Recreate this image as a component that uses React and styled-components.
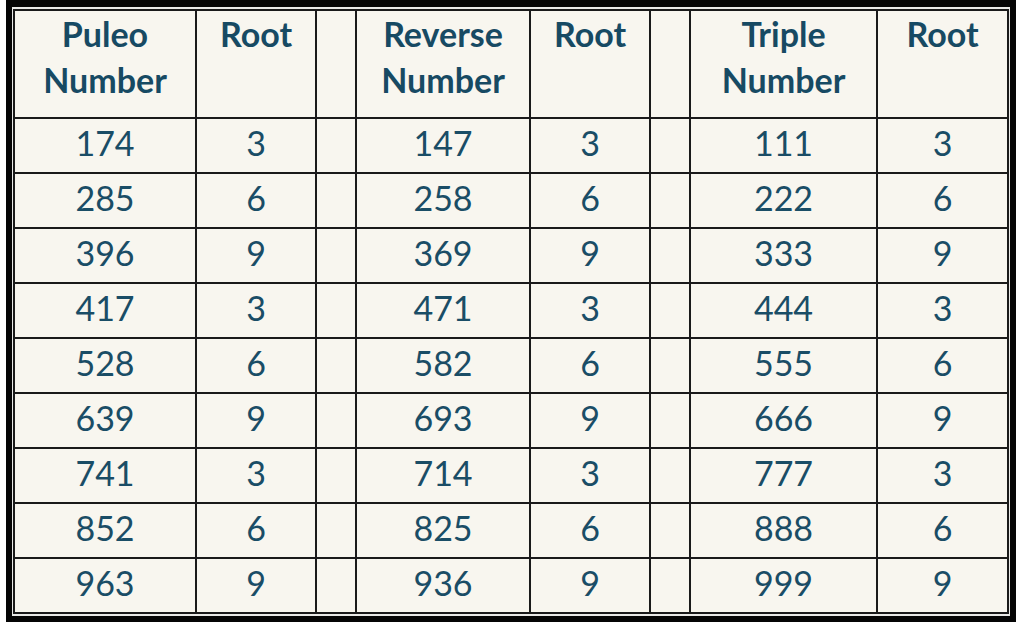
import React from 'react';
import styled, { createGlobalStyle } from 'styled-components';

const GlobalStyle = createGlobalStyle`
  html, body {
    margin: 0;
    padding: 0;
    background: #ffffff;
  }
  body {
    font-family: Lato, "Open Sans", sans-serif;
  }
`;

const Frame = styled.div`
  width: 996px;
  margin-left: 6px;
  border: 6px solid #050505;
  border-top-width: 7px;
  padding: 2px 1px;
  background: #e9e9e7;
`;

const Grid = styled.div`
  display: grid;
  grid-template-columns: 180px 118px 38px 172px 118px 38px 185px 129px;
  grid-template-rows: 106px repeat(9, 53px);
  gap: 2px;
  padding: 2px;
  background: #1a1a1a;
`;

const Cell = styled.div`
  background: #f8f6ef;
  color: #1a4d66;
  font-size: 34px;
  display: flex;
  justify-content: center;
  align-items: center;
  padding-bottom: 6px;
`;

const HeadCell = styled(Cell)`
  font-weight: 700;
  line-height: 46px;
  text-align: center;
  align-items: flex-start;
  padding-top: 0;
  padding-bottom: 0;
  color: #174a63;
`;

const rows = [
  ['174', '3', '147', '3', '111', '3'],
  ['285', '6', '258', '6', '222', '6'],
  ['396', '9', '369', '9', '333', '9'],
  ['417', '3', '471', '3', '444', '3'],
  ['528', '6', '582', '6', '555', '6'],
  ['639', '9', '693', '9', '666', '9'],
  ['741', '3', '714', '3', '777', '3'],
  ['852', '6', '825', '6', '888', '6'],
  ['963', '9', '936', '9', '999', '9'],
];

const App = () => {
  return (
    <>
      <GlobalStyle />
      <Frame>
        <Grid>
          <HeadCell>Puleo<br />Number</HeadCell>
          <HeadCell>Root</HeadCell>
          <HeadCell />
          <HeadCell>Reverse<br />Number</HeadCell>
          <HeadCell>Root</HeadCell>
          <HeadCell />
          <HeadCell>Triple<br />Number</HeadCell>
          <HeadCell>Root</HeadCell>
          {rows.map((r, i) => (
            <React.Fragment key={i}>
              <Cell>{r[0]}</Cell>
              <Cell>{r[1]}</Cell>
              <Cell />
              <Cell>{r[2]}</Cell>
              <Cell>{r[3]}</Cell>
              <Cell />
              <Cell>{r[4]}</Cell>
              <Cell>{r[5]}</Cell>
            </React.Fragment>
          ))}
        </Grid>
      </Frame>
    </>
  );
};

export default App;
